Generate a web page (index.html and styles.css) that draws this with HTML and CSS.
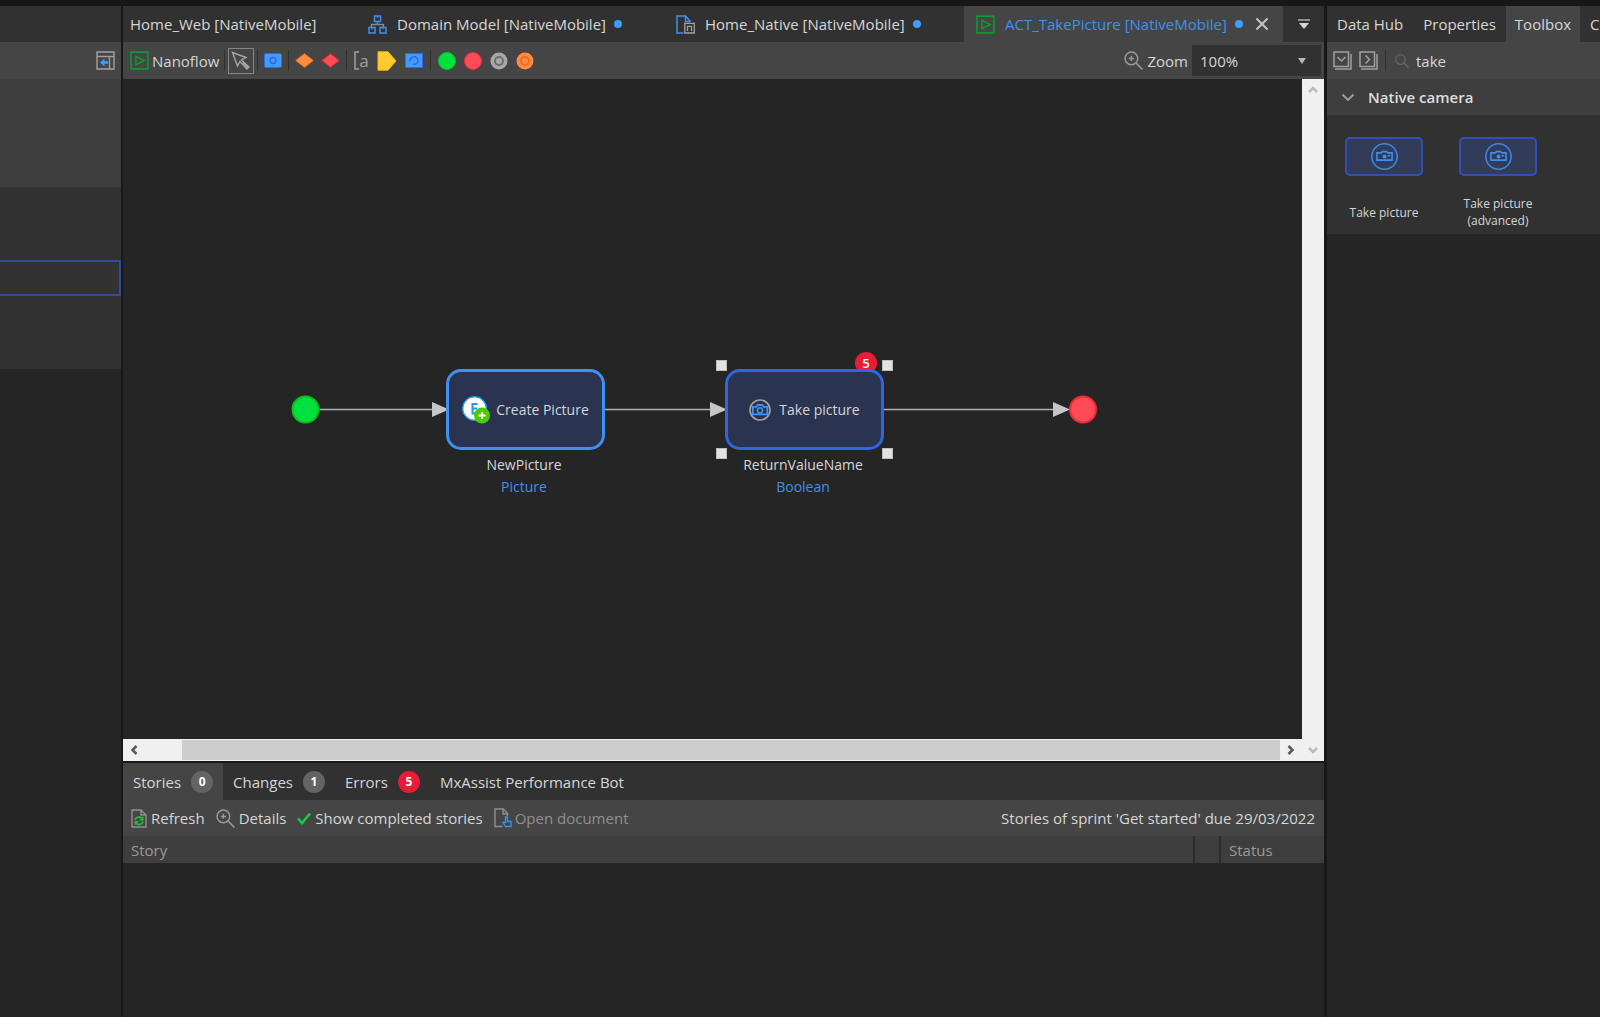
FILE: index.html
```html
<!DOCTYPE html>
<html lang="en">
<head>
<meta charset="utf-8">
<title>ACT_TakePicture [NativeMobile]</title>
<link rel="stylesheet" href="styles.css">
</head>
<body>
<svg class="defs" aria-hidden="true">
  <symbol id="i-nanoflow" viewBox="0 0 18 18"><path d="M1 1h16v16H1z" fill="none" stroke="#0a9a2e" stroke-width="1.6"/><path d="M5.5 5l8 4-8 4z" fill="none" stroke="#0a9a2e" stroke-width="1.4"/></symbol>
  <symbol id="i-magnifier" viewBox="0 0 18 18"><g fill="none" stroke="#9a9a9a" stroke-width="1.4"><circle cx="7" cy="7" r="6"/><path d="M11.5 11.5l6 6M4.500 7h5M7 4.500v5"/></g></symbol>
  <symbol id="i-camera" viewBox="0 0 26 26"><circle cx="13" cy="13" r="12.200" fill="none" stroke="#3f86e0" stroke-width="1.500"/><path d="M5.700 9.500h4l1.300-1.200h4l1.300 1.200h4v7H5.700z" fill="none" stroke="#3f8ff0" stroke-width="1.500"/><circle cx="13" cy="13" r="1.900" fill="#3f8ff0"/><path d="M16 11.500h2.500v1.500H16z" fill="#3f8ff0"/></symbol>
</svg>
<div class="app">
  <aside class="explorer">
    <div class="tabbar"></div>
    <div class="toolbar explorer-tools">
      <button class="icon-btn" type="button" aria-label="Collapse panel"><svg width="19" height="19" viewBox="0 0 19 19"><g fill="none" stroke="#a0a0a0" stroke-width="1.400"><path d="M1 1h17v17H1zM1 5.500h17M13.500 5.500V18"/></g><path d="M4 11.500l4.500-4v2.800H12v2.400H8.500v2.800z" fill="#409cff"/></svg></button>
    </div>
    <div class="explorer-head"></div>
    <div class="explorer-list"><div class="explorer-selected"></div></div>
  </aside>

  <main class="editor">
    <nav class="tabbar">
      <button class="tab tab-web" type="button">Home_Web [NativeMobile]</button>
      <button class="tab tab-domain" type="button"><svg width="19" height="19" viewBox="0 0 19 19"><path d="M9.500 7v3M3.500 12.500V9.500h12v3" fill="none" stroke="#8a8a8a" stroke-width="1.400"/><path d="M6.500 1h6v5.500h-6zM1 12.500h6v5.500H1zM12 12.500h6v5.500h-6z" fill="none" stroke="#4090ee" stroke-width="1.500"/><path d="M9.500 1v2M4 12.500v2M15 12.500v2" stroke="#4090ee"/></svg>Domain Model [NativeMobile]<i class="dot"></i></button>
      <button class="tab tab-native" type="button"><svg width="19" height="19" viewBox="0 0 19 19"><path d="M7.500 18H1V1h8.500l5 5.500M9.500 1v5.500h5" fill="none" stroke="#4090ee" stroke-width="1.500"/><path d="M8.800 8.300h9.500V18H8.800zM11.500 16v-4.700h4V16" fill="none" stroke="#a0a0a0" stroke-width="1.300"/></svg>Home_Native [NativeMobile]<i class="dot"></i></button>
      <div class="tab tab-current">
        <button class="tab-label" type="button"><svg width="19" height="19"><use href="#i-nanoflow"/></svg>ACT_TakePicture [NativeMobile]<i class="dot"></i></button>
        <button class="icon-btn" type="button" aria-label="Close"><svg width="14" height="14" viewBox="0 0 14 14"><path d="M1.500 1.500l11 11M12.500 1.500l-11 11" stroke="#c4c4c4" stroke-width="2"/></svg></button>
      </div>
      <button class="icon-btn tab-more" type="button" aria-label="All tabs"><svg width="12" height="12" viewBox="0 0 12 12"><path d="M0 2h12" stroke="#8f8f8f" stroke-width="2"/><path d="M1 5h10l-5 6z" fill="#d8d8d8"/></svg></button>
    </nav>
    <div class="toolbar editor-tools">
      <span class="kind"><svg width="19" height="19"><use href="#i-nanoflow"/></svg>Nanoflow</span>
      <div class="tool-group">
        <button class="icon-btn pointer" type="button" aria-label="Select"><svg width="20" height="20" viewBox="0 0 20 20"><path d="M1.500 1.500l13.500 5-4.500 2.500 7.500 7-2 2-7-7.500-2.500 4.500z" fill="none" stroke="#a4a4a4" stroke-width="1.400"/><path d="M12 11.500l5 5.500" stroke="#a4a4a4" stroke-width="2"/></svg></button>
      </div>
      <div class="tool-group">
        <button class="icon-btn" type="button" aria-label="Action activity"><svg width="18" height="15" viewBox="0 0 18 15"><rect x=".500" y=".500" width="17" height="14" rx="1.500" fill="#409cff" stroke="#3568e8"/><circle cx="9" cy="7.500" r="3" fill="none" stroke="#3565e8" stroke-width="1.400"/></svg></button>
      </div>
      <div class="tool-group">
        <button class="icon-btn" type="button" aria-label="Decision"><svg width="19" height="15" viewBox="0 0 19 15"><path d="M.8 7.500L9.500.8l8.700 6.700-8.700 6.700z" fill="#ff8c3f" stroke="#f5782a"/></svg></button>
        <button class="icon-btn" type="button" aria-label="Merge"><svg width="19" height="15" viewBox="0 0 19 15"><path d="M.8 7.500L9.500.8l8.700 6.700-8.700 6.700z" fill="#ff4b55" stroke="#e8233c"/></svg></button>
      </div>
      <div class="tool-group tool-group-wide">
        <button class="icon-btn annotation" type="button" aria-label="Annotation"><svg width="5" height="19" viewBox="0 0 5 19"><path d="M5 1H1v17h4" fill="none" stroke="#a0a0a0" stroke-width="1.500"/></svg>a</button>
        <button class="icon-btn" type="button" aria-label="Parameter"><svg width="20" height="20" viewBox="0 0 20 20"><path d="M1 .8h10l8 9.200-8 9.200H1z" fill="#ffcb2e" stroke="#f5b81c"/></svg></button>
        <button class="icon-btn" type="button" aria-label="Loop"><svg width="18" height="15" viewBox="0 0 18 15"><path d="M.5.500h17v14H.500z" fill="#409cff" stroke="#3568e8"/><path d="M5.500 7.500h-2M5.500 7.500V4.800M5.500 7a3.800 3.800 0 1 1 2.500 4" fill="none" stroke="#3565e8" stroke-width="1.400"/></svg></button>
      </div>
      <div class="tool-group tool-group-wide">
        <button class="icon-btn" type="button" aria-label="Start event"><svg width="18" height="18" viewBox="0 0 18 18"><circle cx="9" cy="9" r="8.500" fill="#00e13c" stroke="#08c030"/></svg></button>
        <button class="icon-btn" type="button" aria-label="End event"><svg width="18" height="18" viewBox="0 0 18 18"><circle cx="9" cy="9" r="8.500" fill="#ff4b55" stroke="#e8303f"/></svg></button>
        <button class="icon-btn" type="button" aria-label="Continue event"><svg width="18" height="18" viewBox="0 0 18 18"><circle cx="9" cy="9" r="8.500" fill="#a8a8a8"/><circle cx="9" cy="9" r="4" fill="none" stroke="#6e6e6e" stroke-width="2"/></svg></button>
        <button class="icon-btn" type="button" aria-label="Break event"><svg width="18" height="18" viewBox="0 0 18 18"><circle cx="9" cy="9" r="8.500" fill="#ff8a42"/><circle cx="9" cy="9" r="4" fill="none" stroke="#e86f25" stroke-width="2"/></svg></button>
      </div>
      <div class="zoom">
        <svg width="19" height="19"><use href="#i-magnifier"/></svg>
        <label for="zoom">Zoom</label>
        <div class="zoom-box">
          <select id="zoom"><option>100%</option></select>
          <svg class="caret" width="8" height="6" viewBox="0 0 8 6"><path d="M0 0h8L4 6z" fill="#b8b8b8"/></svg>
        </div>
      </div>
    </div>

    <div class="stage">
      <div class="canvas">
        <svg class="flows" width="1000" height="400" viewBox="0 0 1000 400">
          <path d="M196 330.500h115M482 330.500h110M761 330.500h172" stroke="#b0b0b0" stroke-width="1.500"/>
          <path d="M309 323l17 7.500-17 7.500zM587 323l17 7.500-17 7.500zM930 323l17 7.500-17 7.500z" fill="#c6c6c6"/>
          <circle cx="182.500" cy="330.500" r="13" fill="#00e140" stroke="#0cc020" stroke-width="2"/>
          <circle cx="960" cy="330.500" r="13" fill="#ff4b55" stroke="#ea2c3a" stroke-width="2"/>
        </svg>
        <div class="node node-create"><svg width="28" height="28" viewBox="0 0 28 28"><circle cx="12.500" cy="12.500" r="11.800" fill="#fff" stroke="#1d9bea" stroke-width="1.500"/><path d="M15.500 8h-5v9.500h5M10.500 12.500h4.500" fill="none" stroke="#1d9bea" stroke-width="2"/><circle cx="20" cy="19.500" r="8" fill="#4ecb00"/><path d="M20 16v7M16.500 19.500h7" stroke="#fff" stroke-width="2"/></svg>Create Picture</div>
        <div class="caption caption-create">NewPicture<span class="type">Picture</span></div>
        <span class="badge error-badge">5</span>
        <div class="node node-take"><svg width="22" height="22" viewBox="0 0 22 22"><circle cx="11" cy="11" r="10" fill="none" stroke="#a4a4a4" stroke-width="1.600"/><path d="M3.800 7.800h3.500L8.800 6h4.500l1.500 1.800h3.500v7.500H3.800z" fill="none" stroke="#3f93f8" stroke-width="1.800"/><circle cx="11" cy="11.300" r="2.600" fill="none" stroke="#3f93f8" stroke-width="1.500"/></svg>Take picture</div>
        <div class="caption caption-take">ReturnValueName<span class="type">Boolean</span></div>
        <i class="handle handle-nw"></i><i class="handle handle-ne"></i><i class="handle handle-sw"></i><i class="handle handle-se"></i>
      </div>
      <div class="vscroll">
        <button class="icon-btn" type="button" aria-label="Scroll up"><svg width="10" height="8" viewBox="0 0 10 8"><path d="M1 6l4-4 4 4" fill="none" stroke="#bababa" stroke-width="2.500"/></svg></button>
        <button class="icon-btn" type="button" aria-label="Scroll down"><svg width="10" height="8" viewBox="0 0 10 8"><path d="M1 2l4 4 4-4" fill="none" stroke="#bababa" stroke-width="2.500"/></svg></button>
      </div>
      <div class="hscroll">
        <button class="icon-btn" type="button" aria-label="Scroll left"><svg width="8" height="10" viewBox="0 0 8 10"><path d="M6.500 1l-4 4 4 4" fill="none" stroke="#5a5a5a" stroke-width="2.500"/></svg></button>
        <div class="thumb"></div>
        <button class="icon-btn" type="button" aria-label="Scroll right"><svg width="8" height="10" viewBox="0 0 8 10"><path d="M1.500 1l4 4-4 4" fill="none" stroke="#5a5a5a" stroke-width="2.500"/></svg></button>
      </div>
    </div>

    <section class="dock">
      <nav class="dock-tabs">
        <button class="dock-tab dock-current" type="button">Stories<span class="badge">0</span></button>
        <button class="dock-tab" type="button">Changes<span class="badge">1</span></button>
        <button class="dock-tab" type="button">Errors<span class="badge badge-red">5</span></button>
        <button class="dock-tab" type="button">MxAssist Performance Bot</button>
      </nav>
      <div class="toolbar dock-tools">
        <button class="text-btn" type="button"><svg width="16" height="19" viewBox="0 0 16 19"><path d="M1 1h9l5 5v12H1zM10 1v5h5" fill="none" stroke="#909090" stroke-width="1.400"/><path d="M4 11a4 4 0 0 1 7-1.500M12 12.500a4 4 0 0 1-7 1.500" fill="none" stroke="#15c441" stroke-width="1.800"/><path d="M12.500 7v4.500H8zM3.500 16.500V12H8z" fill="#15c441"/></svg>Refresh</button>
        <button class="text-btn" type="button"><svg width="19" height="19"><use href="#i-magnifier"/></svg>Details</button>
        <button class="text-btn" type="button"><svg width="14" height="13" viewBox="0 0 14 13"><path d="M1 6.500l4 4.500 8-9.500" fill="none" stroke="#0fd345" stroke-width="2.500"/></svg>Show completed stories</button>
        <button class="text-btn text-off" type="button" disabled><svg width="18" height="20" viewBox="0 0 18 20"><path d="M8.500 18.500H1V1h8.500l4 4.500V8M9 1v5h4.500" fill="none" stroke="#909090" stroke-width="1.400"/><path d="M11.500 18.500l-2.500-4h2.500V9h2v4.500h3.500v5z" fill="none" stroke="#3f8ff0" stroke-width="1.400"/></svg>Open document</button>
        <span class="sprint">Stories of sprint 'Get started' due 29/03/2022</span>
      </div>
      <table class="stories">
        <thead><tr><th>Story</th><th class="col-flag"></th><th class="col-status">Status</th></tr></thead>
      </table>
    </section>
  </main>

  <aside class="side">
    <nav class="tabbar">
      <button class="side-tab" type="button">Data Hub</button>
      <button class="side-tab" type="button">Properties</button>
      <button class="side-tab side-current" type="button">Toolbox</button>
      <button class="side-tab" type="button">Connector</button>
    </nav>
    <div class="toolbar side-tools">
      <button class="icon-btn" type="button" aria-label="Expand all"><svg width="19" height="19" viewBox="0 0 19 19"><path d="M1 1h14.500v14.500H1zM18 3v15H2M4.500 6l4 4 4-4" fill="none" stroke="#a0a0a0" stroke-width="1.500"/></svg></button>
      <button class="icon-btn" type="button" aria-label="Collapse all"><svg width="19" height="19" viewBox="0 0 19 19"><path d="M1 1h14.500v14.500H1zM18 3v15H2M6.500 4.500l4 4-4 4" fill="none" stroke="#a0a0a0" stroke-width="1.500"/></svg></button>
      <label class="search"><svg width="14" height="14" viewBox="0 0 14 14"><circle cx="5.500" cy="5.500" r="4.800" fill="none" stroke="#666" stroke-width="1.200"/><path d="M9 9l4.500 4.500" stroke="#666" stroke-width="1.400"/></svg><input type="text" value="take" aria-label="Search toolbox"></label>
    </div>
    <button class="group-head" type="button"><svg width="14" height="9" viewBox="0 0 14 9"><path d="M1.500 1.500L7 7l5.500-5.500" fill="none" stroke="#a0a0a0" stroke-width="1.800"/></svg>Native camera</button>
    <div class="palette">
      <button class="item" type="button"><span class="tile"><svg width="27" height="27"><use href="#i-camera"/></svg></span><span class="item-name">Take picture</span></button>
      <button class="item" type="button"><span class="tile"><svg width="27" height="27"><use href="#i-camera"/></svg></span><span class="item-name">Take picture (advanced)</span></button>
    </div>
  </aside>
</div>
</body>
</html>
```
FILE: styles.css
```css
* { box-sizing: border-box; }
body {
  margin: 0;
  background: #252525;
  color: #d6d6d6;
  font: 15px/20px "Open Sans", "Noto Sans", sans-serif;
}
button, input, select { font: inherit; color: inherit; border: 0; margin: 0; padding: 0; background: none; }
button { display: flex; align-items: center; white-space: nowrap; }
svg { display: block; flex: none; }
.defs { position: absolute; width: 0; height: 0; }

.app {
  display: grid;
  grid-template-columns: 123px minmax(0, 1fr) 273px;
  min-height: 100vh;
  border-top: 6px solid #171717;
}
.tabbar { display: flex; height: 36px; background: #313131; overflow: hidden; }
.toolbar { display: flex; align-items: center; height: 37px; background: #454545; }
.icon-btn { justify-content: center; }

/* Explorer */
.explorer { border-right: 2px solid #181818; }
.explorer-tools { justify-content: flex-end; padding-right: 6px; }
.explorer-head { height: 108px; background: #3e3e3e; }
.explorer-list { height: 182px; padding-top: 73px; background: #323232; }
.explorer-selected { height: 36px; border: 2px solid #304b98; border-left: 0; }

/* Editor */
.editor { display: flex; flex-direction: column; border-right: 3px solid #181818; }
.tab { gap: 10px; padding: 0 12px 0 7px; }
.tab-web { width: 238px; }
.tab-domain { width: 308px; }
.tab-native { width: 295px; }
.dot { width: 8px; height: 8px; margin-left: -2px; border-radius: 50%; background: #409cff; }
.tab-current { display: flex; align-items: center; justify-content: space-between; width: 319px; padding: 0 14px 0 12px; background: #454545; color: #4090ee; }
.tab-label { gap: 10px; }
.tab-more { flex: 1; }

.editor-tools { padding-left: 7px; }
.kind { display: flex; align-items: center; gap: 3px; margin-right: 5px; }
.tool-group { display: flex; align-items: center; gap: 7px; height: 21px; padding: 0 6px; border-left: 1px solid #303030; }
.tool-group:nth-child(2) { padding: 0 3px; }
.tool-group-wide { gap: 8px; padding: 0 7px; }
.pointer { width: 26px; height: 26px; border: 1px solid #858585; }
.annotation { gap: 0; color: #a0a0a0; font-size: 17px; }
.zoom { display: flex; align-items: center; gap: 4px; margin-left: auto; padding-right: 3px; }
.zoom-box { display: grid; align-items: center; width: 129px; height: 31px; background: #313131; }
.zoom-box > * { grid-area: 1 / 1; }
.zoom-box select { width: 100%; height: 100%; padding-left: 8px; appearance: none; outline: 0; }
.caret { justify-self: end; margin-right: 15px; pointer-events: none; }

.stage { flex: 1; display: grid; grid-template: minmax(0, 1fr) 22px / minmax(0, 1fr) 22px; }
.canvas { position: relative; overflow: hidden; font-size: 14px; }
.vscroll { grid-area: 1 / 2 / 3 / 3; display: flex; flex-direction: column; justify-content: space-between; background: #f0f0f0; }
.vscroll .icon-btn { height: 22px; width: 22px; }
.hscroll { grid-area: 2 / 1; display: flex; background: #f0f0f0; padding: 1px 0; }
.hscroll .icon-btn { width: 22px; }
.thumb { flex: 1; margin-left: 37px; background: #cdcdcd; }

/* Diagram on the canvas */
.flows { position: absolute; left: 0; top: 0; }
.node { position: absolute; top: 290px; width: 159px; height: 81px; display: flex; align-items: center; justify-content: center; gap: 6px; border: 3px solid #4090f0; border-radius: 15px; background: #2a334f; }
.node-create { left: 323px; }
.node-take { left: 602px; gap: 8px; border-color: #3264e4; }
.caption { position: absolute; top: 375px; width: 160px; text-align: center; line-height: 22px; }
.caption-create { left: 321px; }
.caption-take { left: 600px; }
.type { display: block; color: #4090ee; }
.handle { position: absolute; width: 11px; height: 11px; background: #e2e2e2; border: 1px solid #bdbdbd; }
.handle-nw, .handle-sw { left: 593px; }
.handle-ne, .handle-se { left: 759px; }
.handle-nw, .handle-ne { top: 281px; }
.handle-sw, .handle-se { top: 369px; }
.badge { display: flex; align-items: center; justify-content: center; width: 22px; height: 22px; border-radius: 50%; background: #646464; color: #fff; font-size: 12px; font-weight: 700; }
.badge-red, .error-badge { background: #e81c36; }
.error-badge { position: absolute; left: 732px; top: 273px; font-size: 13px; font-weight: 600; }

/* Dock */
.dock { height: 256px; border-top: 2px solid #181818; }
.dock-tabs { display: flex; height: 37px; background: #313131; }
.dock-tab { gap: 10px; padding: 0 10px; }
.dock-current { background: #454545; }
.dock-tools { height: 36px; gap: 11px; padding: 0 9px 0 8px; }
.text-btn { gap: 4px; }
.text-off { color: #909090; gap: 3px; }
.sprint { margin-left: auto; white-space: nowrap; }
.stories { width: 100%; border-collapse: collapse; background: #3e3e3e; color: #9a9a9a; }
.stories th { height: 27px; padding: 0 8px; text-align: left; font-weight: 400; }
.stories .col-flag { width: 26px; border-left: 2px solid #2c2c2c; }
.stories .col-status { width: 104px; border-left: 2px solid #2c2c2c; }

/* Toolbox */
.side { overflow: hidden; }
.side-tab { flex: none; padding: 0 10px; }
.side-current { padding: 0 9px; background: #454545; }
.side-tools { gap: 7px; padding-left: 6px; }
.search { display: flex; flex: 1; align-items: center; gap: 7px; height: 21px; padding-left: 9px; border-left: 1px solid #303030; }
.search input { width: 160px; outline: 0; }
.group-head { gap: 13px; width: 100%; height: 36px; padding-left: 14px; background: #3e3e3e; color: #dedede; font-weight: 600; }
.palette { display: flex; gap: 36px; height: 119px; padding: 22px 18px 0; background: #313131; }
.item { flex-direction: column; justify-content: flex-start; width: 78px; height: 97px; }
.tile { flex: none; display: grid; place-items: center; width: 78px; height: 39px; border: 2px solid #3050b8; border-radius: 5px; background: #323b58; }
.item-name { display: flex; flex: none; align-items: center; height: 34px; margin-top: 19px; font-size: 12px; line-height: 17px; white-space: normal; text-align: center; }
```
